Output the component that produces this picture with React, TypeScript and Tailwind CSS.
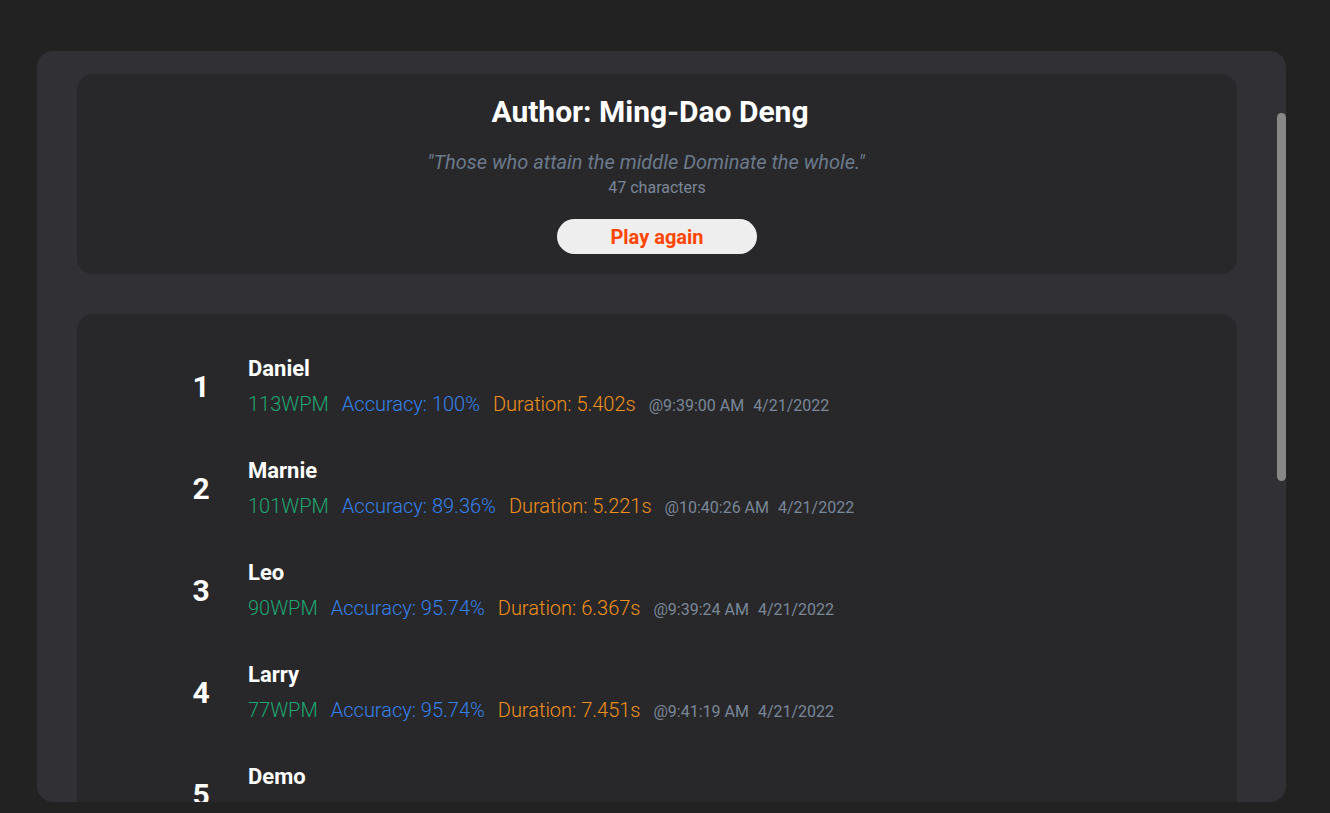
// Results screen: quote summary card and leaderboard list

const scores = [
  { rank: 1, name: "Daniel", wpm: 113, accuracy: "100%", duration: "5.402s", time: "@9:39:00 AM", date: "4/21/2022" },
  { rank: 2, name: "Marnie", wpm: 101, accuracy: "89.36%", duration: "5.221s", time: "@10:40:26 AM", date: "4/21/2022" },
  { rank: 3, name: "Leo", wpm: 90, accuracy: "95.74%", duration: "6.367s", time: "@9:39:24 AM", date: "4/21/2022" },
  { rank: 4, name: "Larry", wpm: 77, accuracy: "95.74%", duration: "7.451s", time: "@9:41:19 AM", date: "4/21/2022" },
  { rank: 5, name: "Demo", wpm: 70, accuracy: "93.62%", duration: "8.102s", time: "@9:45:02 AM", date: "4/21/2022" },
]

export default function App() {
  return <main className="min-h-screen bg-[#222223] pl-[37px] pr-[44px] pt-[51px] font-['Roboto',sans-serif]">
    {/* outer panel */}
    <div className="relative h-[751px] overflow-hidden rounded-2xl bg-[#313035] pl-10 pr-[49px] pt-[23px]">
      {/* quote card */}
      <section className="flex flex-col items-center rounded-2xl bg-[#28282a] pt-5 pb-5">
        <h1 className="pr-[14px] text-[30px] leading-9 font-bold text-white">Author: Ming-Dao Deng</h1>
        <p className="mt-[18px] pr-[22px] text-[20px] leading-7 italic text-[#6c7a8a]">"Those who attain the middle Dominate the whole."</p>
        <p className="mt-[2px] text-[16px] leading-5 text-[#7a8797]">47 characters</p>
        <button className="mt-[21px] h-[35px] w-[200px] rounded-full bg-[#eeeeee] text-[20px] font-bold text-[#ff4500]">Play again</button>
      </section>

      {/* leaderboard */}
      <section className="mt-10 flex flex-col gap-[39px] rounded-2xl bg-[#28282a] pl-[100px] pt-[41px] pb-10">
        {scores.map(s => (
          <div key={s.rank} className="flex items-center gap-[23px]">
            <div className="w-12 text-center text-[30px] leading-9 font-bold text-white">{s.rank}</div>
            <div className="flex flex-col">
              <div className="text-[22px] leading-7 font-bold text-white">{s.name}</div>
              <div className="mt-[7px] flex h-7 items-baseline gap-[13px] text-[20px] leading-7 font-light">
                <span className="text-[#1ea672]">{s.wpm}WPM</span>
                <span className="text-[#3580ea]">Accuracy: {s.accuracy}</span>
                <span className="text-[#f0901a]">Duration: {s.duration}</span>
                <span className="text-[16px] font-normal text-[#7a8797]">{s.time}<span className="ml-[9px]">{s.date}</span></span>
              </div>
            </div>
          </div>
        ))}
      </section>

      {/* scrollbar thumb */}
      <div className="absolute right-0 top-[62px] h-[368px] w-[9px] rounded-full bg-[#888888]" />
    </div>
  </main>
}
